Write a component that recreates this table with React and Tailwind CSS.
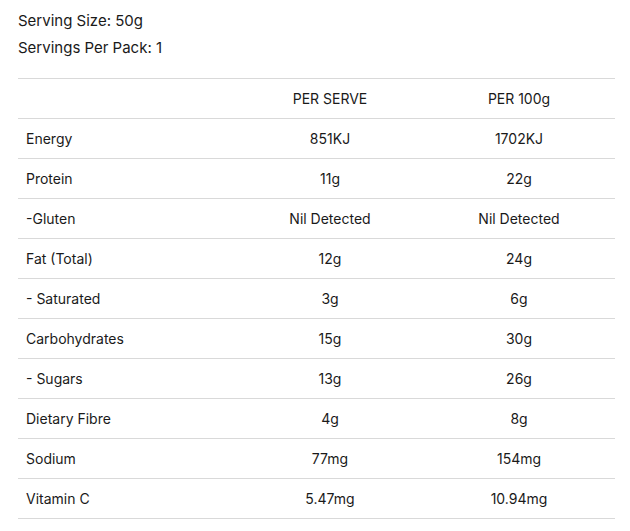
const ROWS = [
  ['Energy', '851KJ', '1702KJ'],
  ['Protein', '11g', '22g'],
  ['-Gluten', 'Nil Detected', 'Nil Detected'],
  ['Fat (Total)', '12g', '24g'],
  ['- Saturated', '3g', '6g'],
  ['Carbohydrates', '15g', '30g'],
  ['- Sugars', '13g', '26g'],
  ['Dietary Fibre', '4g', '8g'],
  ['Sodium', '77mg', '154mg'],
  ['Vitamin C', '5.47mg', '10.94mg'],
];

export default function App() {
  return (
    <div className="bg-white w-[630px] h-[531px] px-[18px] pt-[11px] text-[#1a1a1a] font-['Inter',_'Liberation_Sans',_sans-serif]">
      <p className="text-[15px] leading-[20px] mb-[7px]">Serving Size: 50g</p>
      <p className="text-[15px] leading-[20px]">Servings Per Pack: 1</p>

      <div className="mt-[20px] w-[597px] border-t border-[#d9d9d9] text-[14px]">
        <div className="grid grid-cols-[219px_186px_192px] h-[40px] items-center border-b border-[#d9d9d9]">
          <span />
          <span className="text-center">PER SERVE</span>
          <span className="text-center">PER 100g</span>
        </div>
        {ROWS.map(([label, serve, per100]) => (
          <div
            key={label}
            className="grid grid-cols-[219px_186px_192px] h-[40px] items-center border-b border-[#d9d9d9]"
          >
            <span className="pl-[8px]">{label}</span>
            <span className="text-center">{serve}</span>
            <span className="text-center">{per100}</span>
          </div>
        ))}
      </div>
    </div>
  );
}
